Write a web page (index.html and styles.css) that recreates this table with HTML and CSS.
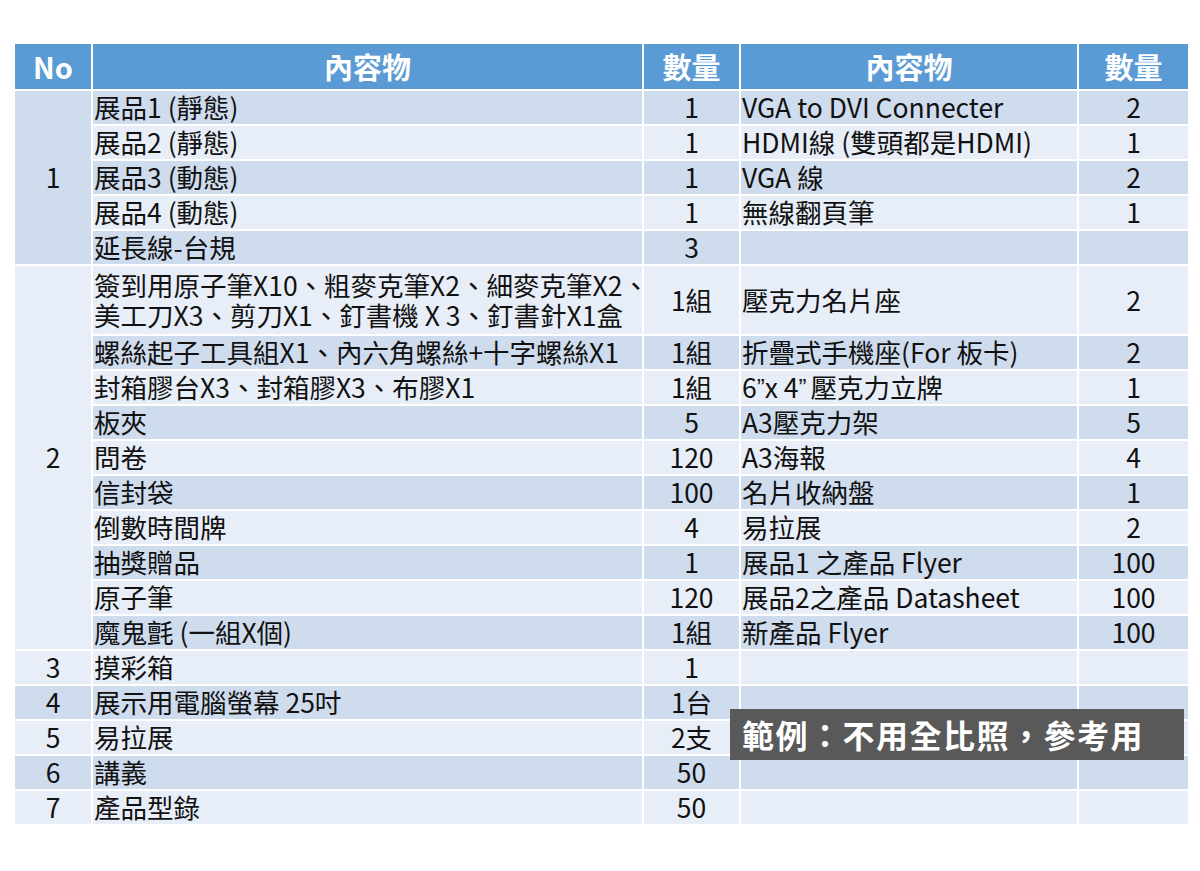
FILE: index.html
```html
<!DOCTYPE html>
<html lang="zh-Hant">
<head>
<meta charset="utf-8">
<title>內容物清單</title>
<link rel="stylesheet" href="styles.css">
</head>
<body>
<div class="page">
  <div class="sheet">
    <div class="grid">
      <div class="hd">No</div>
      <div class="hd">內容物</div>
      <div class="hd">數量</div>
      <div class="hd">內容物</div>
      <div class="hd">數量</div>

      <div class="no dark span5">1</div>
      <div class="item dark">展品1 (靜態)</div><div class="qty dark">1</div><div class="item dark">VGA to DVI Connecter</div><div class="qty dark">2</div>
      <div class="item light">展品2 (靜態)</div><div class="qty light">1</div><div class="item light">HDMI線 (雙頭都是HDMI)</div><div class="qty light">1</div>
      <div class="item dark">展品3 (動態)</div><div class="qty dark">1</div><div class="item dark">VGA 線</div><div class="qty dark">2</div>
      <div class="item light">展品4 (動態)</div><div class="qty light">1</div><div class="item light">無線翻頁筆</div><div class="qty light">1</div>
      <div class="item dark">延長線-台規</div><div class="qty dark">3</div><div class="item dark"></div><div class="qty dark"></div>

      <div class="no light span11">2</div>
      <div class="item light span2 multi"><span class="ln">簽到用原子筆X10、粗麥克筆X2、細麥克筆X2、</span><span class="ln">美工刀X3、剪刀X1、釘書機 X 3、釘書針X1盒</span></div>
      <div class="qty light span2">1組</div><div class="item light span2">壓克力名片座</div><div class="qty light span2">2</div>
      <div class="item dark">螺絲起子工具組X1、內六角螺絲+十字螺絲X1</div><div class="qty dark">1組</div><div class="item dark">折疊式手機座(For 板卡)</div><div class="qty dark">2</div>
      <div class="item light">封箱膠台X3、封箱膠X3、布膠X1</div><div class="qty light">1組</div><div class="item light">6<span class="q">”</span>x 4<span class="q q-end">”</span> 壓克力立牌</div><div class="qty light">1</div>
      <div class="item dark">板夾</div><div class="qty dark">5</div><div class="item dark">A3壓克力架</div><div class="qty dark">5</div>
      <div class="item light">問卷</div><div class="qty light">120</div><div class="item light">A3海報</div><div class="qty light">4</div>
      <div class="item dark">信封袋</div><div class="qty dark">100</div><div class="item dark">名片收納盤</div><div class="qty dark">1</div>
      <div class="item light">倒數時間牌</div><div class="qty light">4</div><div class="item light">易拉展</div><div class="qty light">2</div>
      <div class="item dark">抽獎贈品</div><div class="qty dark">1</div><div class="item dark">展品1 之產品 Flyer</div><div class="qty dark">100</div>
      <div class="item light">原子筆</div><div class="qty light">120</div><div class="item light">展品2之產品 Datasheet</div><div class="qty light">100</div>
      <div class="item dark">魔鬼氈 (一組X個)</div><div class="qty dark">1組</div><div class="item dark">新產品 Flyer</div><div class="qty dark">100</div>

      <div class="no light">3</div><div class="item light">摸彩箱</div><div class="qty light">1</div><div class="item light"></div><div class="qty light"></div>
      <div class="no dark">4</div><div class="item dark">展示用電腦螢幕 25吋</div><div class="qty dark">1台</div><div class="item dark"></div><div class="qty dark"></div>
      <div class="no light">5</div><div class="item light">易拉展</div><div class="qty light">2支</div><div class="item light"></div><div class="qty light"></div>
      <div class="no dark">6</div><div class="item dark">講義</div><div class="qty dark">50</div><div class="item dark"></div><div class="qty dark"></div>
      <div class="no light">7</div><div class="item light">產品型錄</div><div class="qty light">50</div><div class="item light"></div><div class="qty light"></div>
    </div>
    <div class="note">範例：不用全比照，參考用</div>
  </div>
</div>
</body>
</html>
```

FILE: styles.css
```css
html, body {
  margin: 0;
  padding: 0;
  background: #ffffff;
}

.page {
  width: 1200px;
  height: 871px;
  padding: 44px 0 0 15px;
  box-sizing: border-box;
  font-family: "Noto Sans CJK TC", "Noto Sans", sans-serif;
  color: #111111;
}

.sheet {
  position: relative;
  width: 1173px;
}

.grid {
  display: grid;
  grid-template-columns: 76px 549px 95px 336px 109px;
  grid-template-rows: 45px repeat(21, 33px);
  gap: 2px;
}

.hd {
  background: #5b9bd5;
  color: #ffffff;
  font-weight: bold;
  font-size: 29px;
  line-height: 1;
  display: flex;
  align-items: center;
  justify-content: center;
}

.no, .item, .qty {
  font-size: 26.5px;
  line-height: 1;
  display: flex;
  align-items: center;
  white-space: nowrap;
}

.no, .qty {
  justify-content: center;
}

.item {
  padding-left: 1px;
}

.q {
  font-family: "Liberation Sans", sans-serif;
  font-size: 24px;
}

.q-end {
  margin-right: 4px;
}

.dark { background: #cfdcee; }
.light { background: #e8eef7; }

.span5 { grid-row: span 5; }
.span11 { grid-row: span 11; }
.span2 { grid-row: span 2; }

.multi {
  flex-direction: column;
  align-items: flex-start;
  justify-content: center;
  gap: 4px;
}

.multi .ln {
  display: block;
  line-height: 1;
  white-space: nowrap;
}

.note {
  position: absolute;
  left: 715px;
  top: 665px;
  width: 454px;
  height: 51px;
  box-sizing: border-box;
  padding-left: 12px;
  background: #595959;
  color: #ffffff;
  font-size: 32px;
  font-weight: bold;
  line-height: 51px;
  letter-spacing: 1.5px;
  white-space: nowrap;
}
```
